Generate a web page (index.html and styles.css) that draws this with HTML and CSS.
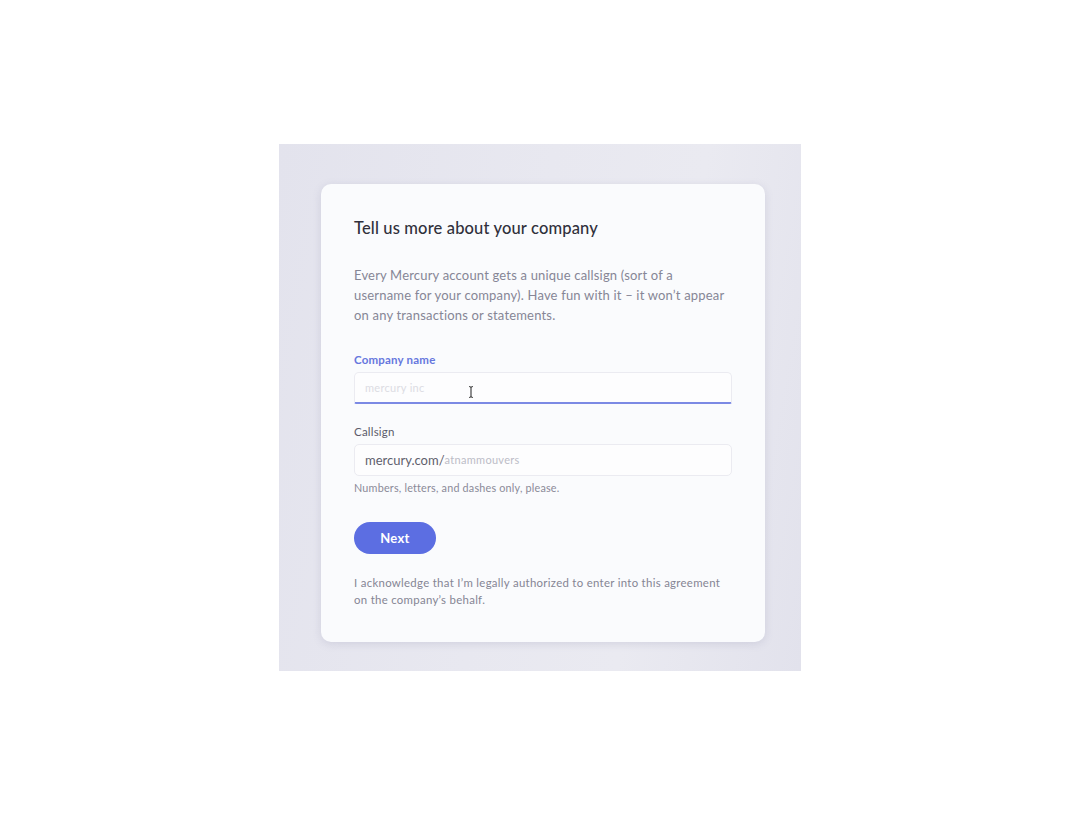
FILE: index.html
```html
<!DOCTYPE html>
<html>
<head>
<meta charset="utf-8">
<link rel="stylesheet" href="styles.css">
</head>
<body>
<div class="stage">
  <div class="card">
    <h1 class="title">Tell us more about your company</h1>
    <p class="intro">Every Mercury account gets a unique callsign (sort of a<br>username for your company). Have fun with it – it won’t appear<br>on any transactions or statements.</p>
    <div class="field">
      <label class="label label-active">Company name</label>
      <div class="input input-active">
        <span class="ghost">mercury inc</span>
        <svg class="ibeam" width="8" height="14" viewBox="0 0 8 14"><path d="M2 1.5 Q4 1.5 4 3 V11 Q4 12.5 2 12.5 M6 1.5 Q4 1.5 4 3 M4 11 Q4 12.5 6 12.5" fill="none" stroke="#444" stroke-width="1.2"/></svg>
      </div>
    </div>
    <div class="field">
      <label class="label">Callsign</label>
      <div class="input"><span class="prefix">mercury.com/</span><span class="ghost ghost-dark">atnammouvers</span></div>
      <div class="hint">Numbers, letters, and dashes only, please.</div>
    </div>
    <button class="btn">Next</button>
    <p class="ack">I acknowledge that I’m legally authorized to enter into this agreement<br>on the company’s behalf.</p>
  </div>
</div>
</body>
</html>
```
FILE: styles.css
```css
* { box-sizing: border-box; }
html, body { margin: 0; padding: 0; background: #ffffff; }
body {
  height: 814px;
  display: flex;
  align-items: center;
  justify-content: center;
  font-family: Lato, "Open Sans", sans-serif;
}
.stage {
  width: 522px;
  height: 527px;
  padding: 40px 36px 29px 42px;
  background: linear-gradient(100deg, #e3e3ed 0%, #e8e8f0 45%, #eaeaf1 70%, #e2e2ec 100%);
}
.card {
  width: 444px;
  height: 458px;
  background: #fafbfd;
  border-radius: 10px;
  box-shadow: 0 2px 8px rgba(110, 110, 150, 0.18);
  padding: 33px 33px 32px 33px;
}
.title {
  margin: 0;
  font-size: 16.5px;
  line-height: 22px;
  font-weight: 500;
  color: #30303b;
  letter-spacing: 0.15px;
}
.intro {
  margin: 26px 0 0 0;
  font-size: 13px;
  line-height: 20px;
  color: #868696;
  letter-spacing: 0.18px;
}
.field { margin-top: 27px; }
.field + .field { margin-top: 20px; }
.label {
  display: block;
  font-size: 11.5px;
  line-height: 16px;
  font-weight: 400;
  color: #5c5c6a;
  margin-bottom: 4px;
  letter-spacing: 0.2px;
}
.label-active { color: #6677de; font-weight: 700; }
.input {
  position: relative;
  height: 32px;
  border: 1px solid #ebebf1;
  border-radius: 5px;
  background: #fdfdfe;
  display: flex;
  align-items: center;
  padding: 0 10px;
  font-size: 13px;
}
.input-active {
  border-bottom: 2px solid #7b89e4;
  border-radius: 5px 5px 2px 2px;
}
.ghost { color: #dcdce3; font-size: 11px; letter-spacing: 0.3px; }
.ghost-dark { color: #bcbcc7; }
.prefix { color: #5f5f6d; letter-spacing: 0; }
.ibeam { position: absolute; left: 112px; top: 12px; }
.hint {
  margin-top: 4px;
  font-size: 10.8px;
  line-height: 16px;
  color: #8a8a98;
  letter-spacing: 0.2px;
}
.btn {
  margin-top: 26px;
  width: 82px;
  height: 32px;
  border: none;
  border-radius: 16px;
  background: #5c6ee2;
  color: #ffffff;
  font-family: Lato, "Open Sans", sans-serif;
  font-size: 13px;
  font-weight: 700;
  letter-spacing: 0.3px;
  display: block;
}
.ack {
  margin: 20px 0 0 0;
  font-size: 11.4px;
  line-height: 17px;
  color: #858594;
  letter-spacing: 0.3px;
}
```
